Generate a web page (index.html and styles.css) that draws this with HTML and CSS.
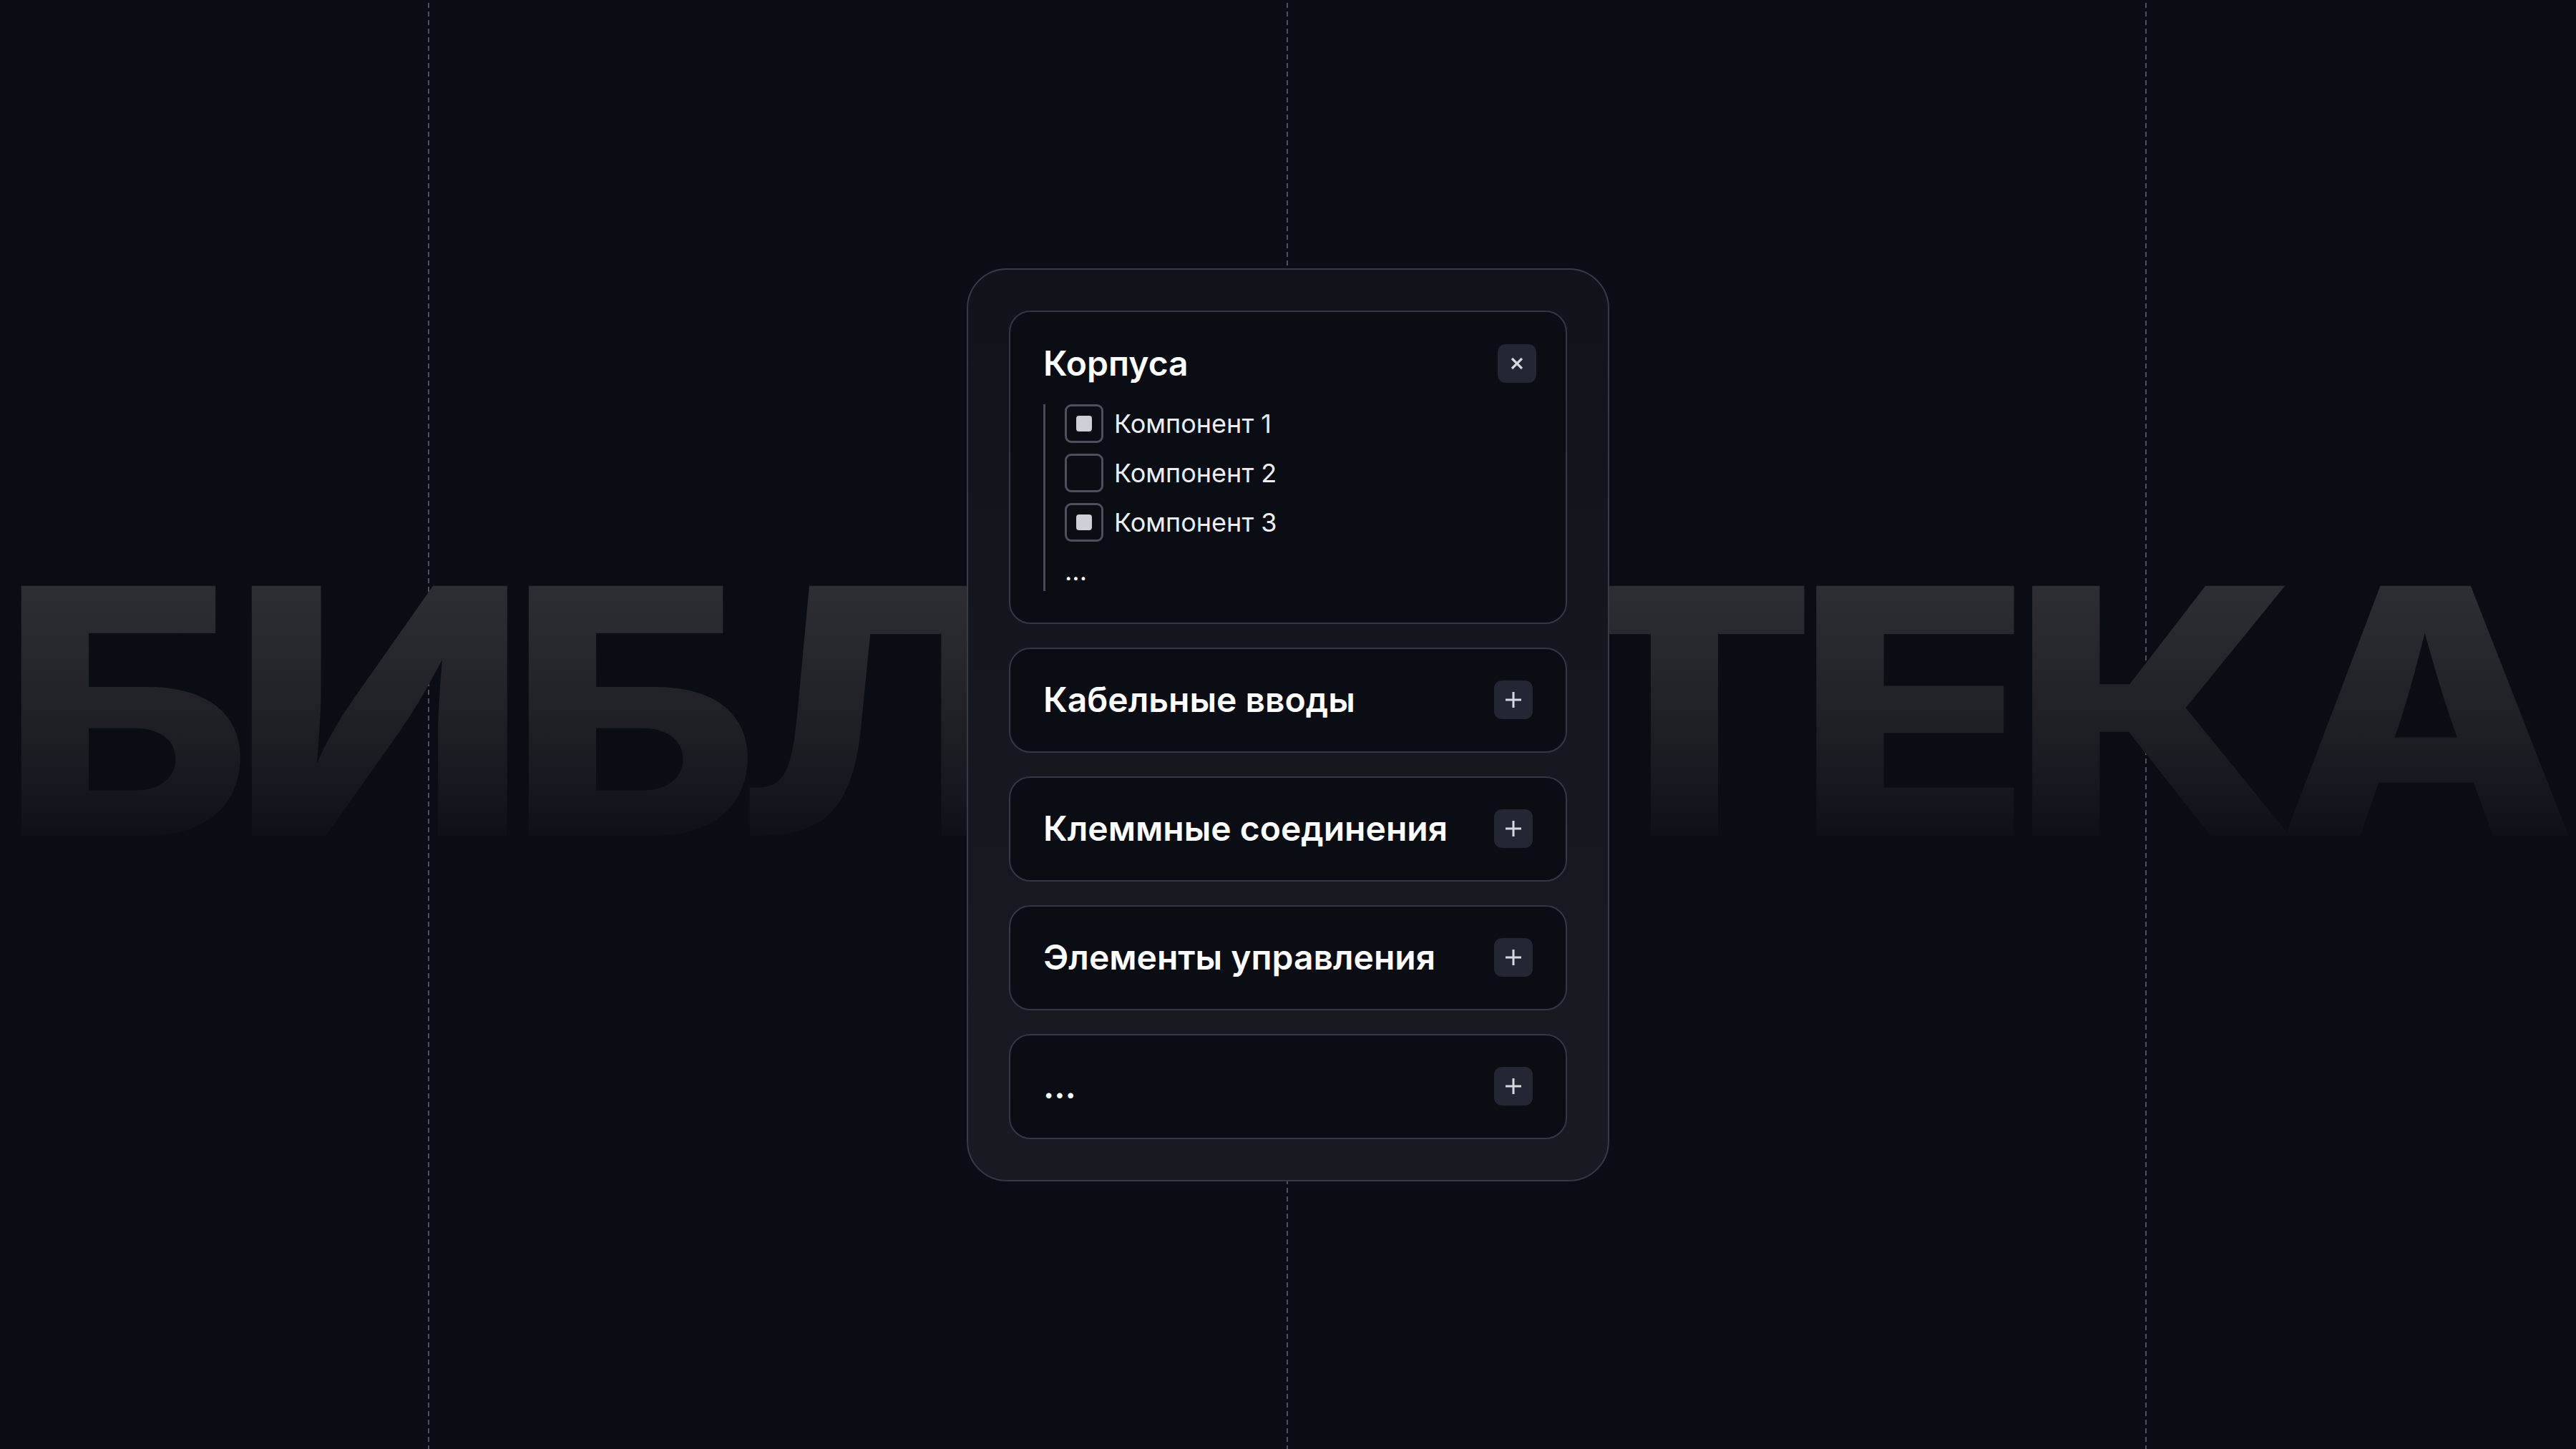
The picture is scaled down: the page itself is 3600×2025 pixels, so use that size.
FILE: index.html
```html
<!DOCTYPE html>
<html lang="ru">
<head>
<meta charset="utf-8">
<title>Библиотека</title>
<link rel="stylesheet" href="styles.css">
</head>
<body>
<main class="stage">
  <div class="guides">
    <div class="guide"></div>
    <div class="guide"></div>
    <div class="guide"></div>
  </div>
  <div class="wordmark-row">
    <div class="wordmark">БИБЛИОТЕКА</div>
  </div>
  <section class="panel">
    <div class="card card-open">
      <div class="card-head">
        <h2 class="card-title">Корпуса</h2>
        <button class="icon-btn icon-btn-close" aria-label="Закрыть">
          <svg class="icon-x" viewBox="0 0 18 18"><path d="M2 2 L16 16 M16 2 L2 16"/></svg>
        </button>
      </div>
      <ul class="tree">
        <li class="tree-item"><span class="check is-on"></span><span class="tree-label">Компонент 1</span></li>
        <li class="tree-item"><span class="check"></span><span class="tree-label">Компонент 2</span></li>
        <li class="tree-item"><span class="check is-on"></span><span class="tree-label">Компонент 3</span></li>
        <li class="tree-more">...</li>
      </ul>
    </div>
    <div class="card">
      <h2 class="card-title">Кабельные вводы</h2>
      <button class="icon-btn" aria-label="Добавить"><svg class="icon-plus" viewBox="0 0 24 24"><path d="M12 1 V23 M1 12 H23"/></svg></button>
    </div>
    <div class="card">
      <h2 class="card-title">Клеммные соединения</h2>
      <button class="icon-btn" aria-label="Добавить"><svg class="icon-plus" viewBox="0 0 24 24"><path d="M12 1 V23 M1 12 H23"/></svg></button>
    </div>
    <div class="card">
      <h2 class="card-title">Элементы управления</h2>
      <button class="icon-btn" aria-label="Добавить"><svg class="icon-plus" viewBox="0 0 24 24"><path d="M12 1 V23 M1 12 H23"/></svg></button>
    </div>
    <div class="card">
      <h2 class="card-title">...</h2>
      <button class="icon-btn" aria-label="Добавить"><svg class="icon-plus" viewBox="0 0 24 24"><path d="M12 1 V23 M1 12 H23"/></svg></button>
    </div>
  </section>
</main>
</body>
</html>
```

FILE: styles.css
```css
* { box-sizing: border-box; }

html, body {
  margin: 0;
  padding: 0;
  background: #0a0d14;
}

body {
  font-family: "Inter", "Noto Sans", "Liberation Sans", sans-serif;
  color: #f3f4f6;
}

.stage {
  display: grid;
  grid-template-columns: 100%;
  grid-template-rows: 100%;
  width: 3600px;
  height: 2025px;
  overflow: hidden;
  background: #0a0d14;
}

.stage > * {
  grid-area: 1 / 1;
  min-width: 0;
}

/* dashed vertical guides */
.guides {
  display: grid;
  grid-template-columns: repeat(3, 1fr);
  height: 100%;
}

.guide {
  height: 100%;
  background-image: linear-gradient(to bottom, #4b505c 0 7px, transparent 7px 12px);
  background-size: 2px 12px;
  background-repeat: repeat-y;
  background-position: calc(50% - 1px) 4px;
}

/* huge background word */
.wordmark-row {
  display: flex;
  justify-content: center;
  align-items: flex-start;
  width: 100%;
}

.wordmark {
  flex: none;
  margin-top: 754px;
  font-family: "Inter", "Roboto", sans-serif;
  font-weight: 800;
  font-size: 480px;
  line-height: 1;
  letter-spacing: -28px;
  padding-right: 28px;
  white-space: nowrap;
  transform: scaleX(1.14);
  background: linear-gradient(to bottom, #2d2f34 0%, #2c2e33 14%, #26282d 32%, #1f2126 50%, #16191f 70%, #0d1017 87%, #0a0d14 100%);
  -webkit-background-clip: text;
  background-clip: text;
  color: transparent;
}

/* panel */
.panel {
  position: relative;
  z-index: 1;
  align-self: center;
  justify-self: center;
  width: 898px;
  display: flex;
  flex-direction: column;
  gap: 33px;
  padding: 57px;
  border: 2px solid #363a45;
  border-radius: 56px;
  background: linear-gradient(to bottom, #10131a 0%, #15181f 60%, #181a21 100%);
}

.card {
  display: flex;
  align-items: center;
  justify-content: space-between;
  height: 147px;
  padding: 0 46px 0 46px;
  border: 2px solid #343844;
  border-radius: 30px;
  background: #0a0d14;
}

.card-open {
  display: block;
  height: 438px;
  padding: 45px 41px 44px 46px;
}

.card-head {
  display: flex;
  align-items: center;
  justify-content: space-between;
  height: 54px;
}

.card-title {
  margin: 0;
  font-size: 48px;
  font-weight: 600;
  line-height: 54px;
  letter-spacing: 0;
  color: #ffffff;
}

.icon-btn {
  display: flex;
  align-items: center;
  justify-content: center;
  width: 54px;
  height: 54px;
  padding: 0;
  border: none;
  border-radius: 11px;
  background: #222733;
}

.icon-x {
  width: 18px;
  height: 18px;
  fill: none;
  stroke: #d6d9df;
  stroke-width: 3.2;
}

.icon-plus {
  width: 24px;
  height: 24px;
  fill: none;
  stroke: #d6d9df;
  stroke-width: 3;
}

/* component tree */
.tree {
  list-style: none;
  margin: 30px 0 0 0;
  padding: 0 0 10px 27px;
  border-left: 3px solid #474c58;
  display: flex;
  flex-direction: column;
  gap: 15px;
}

.tree-item {
  display: flex;
  align-items: center;
  gap: 15px;
  height: 54px;
}

.check {
  display: flex;
  align-items: center;
  justify-content: center;
  width: 54px;
  height: 54px;
  border: 3px solid #4b505c;
  border-radius: 9px;
}

.check.is-on::after {
  content: "";
  width: 22px;
  height: 22px;
  border-radius: 4px;
  background: #cdd0d6;
}

.tree-label {
  font-size: 36px;
  font-weight: 400;
  line-height: 36px;
  color: #eceef2;
}

.tree-more {
  margin-top: 8px;
  font-size: 36px;
  line-height: 36px;
  color: #ffffff;
}
```
